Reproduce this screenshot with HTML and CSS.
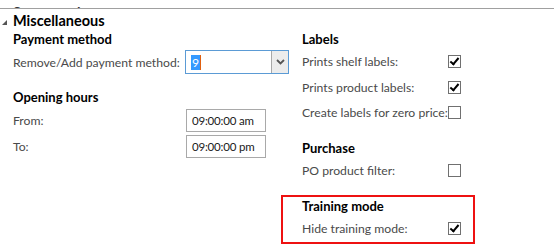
FILE: index.html
```html
<!DOCTYPE html>
<html lang="en">
<head>
    <meta charset="UTF-8">
    <title>Miscellaneous</title>
    <link rel="stylesheet" href="styles.css">
</head>
<body>

    <div class="prev-tab"><span>Store posting</span></div>

    <div class="tab-header">
        <span class="arrow"></span>
        <span class="tab-title">Miscellaneous</span>
    </div>

    <div class="tab-body">
        <div class="column left">
            <div class="group-title">Payment method</div>
            <div class="field">
                <span class="label">Remove/Add payment method:</span>
                <div class="combo">
                    <span class="combo-value"><span class="sel">9</span><span class="caret"></span></span>
                    <span class="combo-btn">
                        <svg width="9" height="6" viewBox="0 0 9 6"><path d="M1 1 L4.5 4.5 L8 1" fill="none" stroke="#555" stroke-width="1.8"/></svg>
                    </span>
                </div>
            </div>

            <div class="group-title spaced">Opening hours</div>
            <div class="field">
                <span class="label">From:</span>
                <div class="textbox">09:00:00 am</div>
            </div>
            <div class="field">
                <span class="label">To:</span>
                <div class="textbox">09:00:00 pm</div>
            </div>
        </div>

        <div class="column right">
            <div class="group-title">Labels</div>
            <div class="check-row">
                <span class="label">Prints shelf labels:</span>
                <span class="checkbox checked"></span>
            </div>
            <div class="check-row">
                <span class="label">Prints product labels:</span>
                <span class="checkbox checked"></span>
            </div>
            <div class="check-row">
                <span class="label">Create labels for zero price:</span>
                <span class="checkbox"></span>
            </div>

            <div class="group-title spaced">Purchase</div>
            <div class="check-row">
                <span class="label">PO product filter:</span>
                <span class="checkbox"></span>
            </div>

            <div class="highlight">
                <div class="group-title">Training mode</div>
                <div class="check-row">
                    <span class="label">Hide training mode:</span>
                    <span class="checkbox checked"></span>
                </div>
            </div>
        </div>
    </div>

</body>
</html>
```

FILE: styles.css
```css
body {
    margin: 0;
    font-family: Lato, "Open Sans", sans-serif;
    font-size: 12.2px;
    color: #4a4a4a;
    background-color: #ffffff;
    width: 554px;
    height: 247px;
    overflow: hidden;
}

.prev-tab {
    height: 8px;
    border-bottom: 1px solid #a0a0a0;
    overflow: hidden;
    display: flex;
    align-items: flex-end;
    padding-left: 13px;
}

.prev-tab span {
    font-weight: bold;
    font-size: 14px;
    line-height: 14px;
    color: #333;
    margin-bottom: -11px;
}

.tab-header {
    display: flex;
    align-items: center;
    height: 20px;
    margin-top: 1px;
}

.arrow {
    width: 0;
    height: 0;
    margin-left: 2px;
    margin-right: 6px;
    margin-top: 4px;
    border-left: 5px solid transparent;
    border-bottom: 5px solid #555;
}

.tab-title {
    font-weight: bold;
    font-size: 14.5px;
    color: #000;
}

.tab-body {
    display: flex;
    padding-left: 13px;
}

.column.left {
    width: 289px;
}

.column.right {
    width: 240px;
}

.label {
    white-space: nowrap;
}

.group-title {
    font-weight: bold;
    font-size: 13px;
    color: #000;
    height: 19px;
    line-height: 19px;
    white-space: nowrap;
}

.group-title.spaced {
    margin-top: 13px;
}

.field {
    display: flex;
    align-items: center;
    height: 26px;
}

.field .label {
    width: 172px;
}

.combo {
    display: flex;
    width: 102px;
    height: 22px;
    border: 1px solid #5b9bd5;
}

.combo-value {
    flex: 1;
    display: flex;
    align-items: center;
    padding-left: 5px;
}

.sel {
    background-color: #3399ff;
    color: #fff;
    line-height: 15px;
    padding: 0 1px;
}

.caret {
    width: 1px;
    height: 15px;
    background-color: #e06010;
}

.combo-btn {
    width: 16px;
    display: flex;
    align-items: center;
    justify-content: center;
    background-color: #ececec;
    border-left: 1px solid #a8a8a8;
}

.textbox {
    width: 73px;
    height: 21px;
    line-height: 21px;
    border: 1px solid #a9a9a9;
    padding-left: 5px;
    font-size: 11.5px;
    letter-spacing: -0.2px;
    color: #1a1a1a;
    margin-left: 1px;
    white-space: nowrap;
}

.check-row {
    display: flex;
    align-items: center;
    height: 25.5px;
}

.check-row .label {
    width: 146px;
}

.checkbox {
    width: 11px;
    height: 11px;
    border: 1px solid #707070;
    position: relative;
}

.checkbox.checked::after {
    content: "";
    position: absolute;
    left: 3px;
    top: 0px;
    width: 3px;
    height: 7px;
    border: solid #000;
    border-width: 0 2px 2px 0;
    transform: rotate(40deg);
}

.highlight {
    margin-top: 12px;
    margin-left: -21px;
    padding-left: 19px;
    width: 171px;
    border: 2px solid #ee1111;
}
```
